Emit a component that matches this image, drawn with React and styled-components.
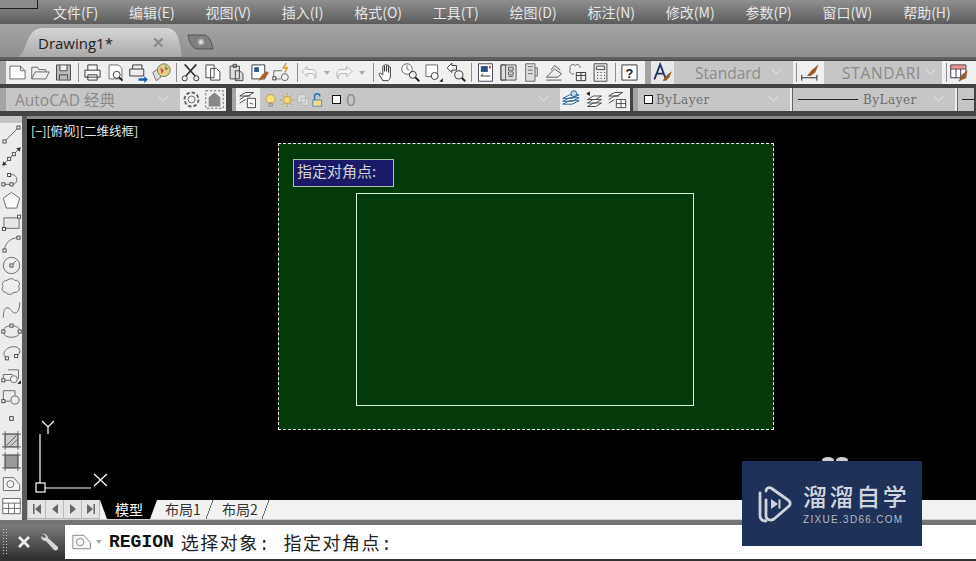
import React from "react";
import styled, { createGlobalStyle } from "styled-components";

const cjk = `"Noto Sans CJK SC", "Liberation Sans", sans-serif`;
const slab = `"DejaVu Serif", serif`;

const Global = createGlobalStyle`
  html, body { margin: 0; padding: 0; background: #000; overflow: hidden; }
  * { box-sizing: border-box; }
`;

const Page = styled.div`
  position: relative;
  width: 976px;
  height: 561px;
  display: flex;
  flex-direction: column;
  overflow: hidden;
  font-family: ${cjk};
`;

const MenuBar = styled.div`
  height: 24px;
  display: flex;
  align-items: center;
  gap: 30.8px;
  background: linear-gradient(#8f8f8f, #5c5c5c);
  padding-left: 53px;
  position: relative;
`;

const AppCorner = styled.div`
  position: absolute;
  left: 0;
  top: 0;
  width: 38px;
  height: 9px;
  background: #8a8a8a;
  border: 1px solid #1c1c1c;
  border-top: 0;
  border-left: 0;
`;

const MenuItem = styled.span`
  color: #e6e6e6;
  font-size: 14px;
  line-height: 24px;
  white-space: nowrap;
`;

const TabBar = styled.div`
  height: 33px;
  display: flex;
  align-items: flex-end;
  background: linear-gradient(#a4a4a4, #8f8f8f);
  padding-left: 17px;
  gap: 4px;
`;

const DocTab = styled.div`
  width: 165px;
  height: 29px;
  display: flex;
  align-items: center;
  justify-content: space-between;
  padding: 0 17px 0 21px;
  background: linear-gradient(#d6d6d6, #a9a9a9);
  clip-path: path("M0 29 C8 27 9 12 14 6 C17 2 20 0 28 0 L148 0 C160 0 162 8 165 29 Z");
  color: #222;
  font-size: 15px;
  font-family: "Open Sans", sans-serif;
`;

const CloseMark = styled.span`
  color: #8a8a8a;
  font-size: 15px;
  font-weight: 700;
  font-family: "Liberation Sans", sans-serif;
`;

const NewTab = styled.svg`
  width: 30px;
  height: 18px;
  margin-bottom: 6px;
`;

const ToolStack = styled.div`
  background: #434343;
  border-top: 3px solid #5f5f5f;
  padding: 1px 0 5px;
  display: flex;
  flex-direction: column;
  gap: 4px;
`;

const ToolRow = styled.div`
  height: 23px;
  display: flex;
  align-items: stretch;
`;

const Grip = styled.div`
  width: ${(p) => p.$w || 6}px;
  flex: none;
  background-color: #555;
  background-image: radial-gradient(#aaa 0.7px, transparent 0.8px);
  background-size: 2px 2px;
`;

const Strip = styled.div`
  display: flex;
  align-items: center;
  background: ${(p) => p.$bg || "#f0f0f0"};
  width: ${(p) => (p.$w ? `${p.$w}px` : "auto")};
  flex: ${(p) => (p.$grow ? 1 : "none")};
  padding: ${(p) => p.$pad || "0"};
`;

const Gap = styled.div`
  width: ${(p) => p.$w}px;
  flex: none;
  background: ${(p) => p.$bg || "#434343"};
`;

const ToolBtn = styled.div`
  width: ${(p) => p.$w || 23}px;
  height: 23px;
  flex: none;
  display: flex;
  align-items: center;
  justify-content: center;
`;

const Sep = styled.div`
  width: 1px;
  height: 19px;
  flex: none;
  background: #8e8e8e;
  margin: 0 ${(p) => p.$m ?? 2.5}px;
`;

const Chevron = styled.span`
  margin-left: auto;
  width: 7px;
  height: 7px;
  border-right: 1px solid #e0e0e0;
  border-bottom: 1px solid #e0e0e0;
  transform: rotate(45deg) translate(-2px, -2px);
  flex: none;
`;

const Combo = styled.div`
  width: ${(p) => p.$w}px;
  flex: none;
  height: 23px;
  display: flex;
  align-items: center;
  gap: ${(p) => p.$gap || 0}px;
  background: #c6c6c6;
  color: ${(p) => p.$color || "#8b8b8b"};
  font-family: ${(p) => p.$font || `"Open Sans", ${cjk}`};
  font-size: ${(p) => p.$size || 15}px;
  letter-spacing: ${(p) => p.$track || 0}px;
  padding: ${(p) => p.$pad || "0 13px 0 10px"};
  white-space: nowrap;
  overflow: hidden;
`;

const Swatch = styled.span`
  width: 9px;
  height: 9px;
  background: #fff;
  border: 1px solid #111;
  flex: none;
  margin-left: ${(p) => p.$ml || 0}px;
`;

const LayerName = styled.span`
  margin-left: 5px;
`;

const LineSample = styled.span`
  width: 60px;
  height: 1px;
  background: #222;
  flex: none;
  margin-right: ${(p) => p.$gap || 0}px;
`;

const WorkArea = styled.div`
  flex: 1;
  display: flex;
  min-height: 0;
`;

const LeftTools = styled.div`
  width: 22px;
  flex: none;
  background: #ececec;
  display: flex;
  flex-direction: column;
  align-items: center;
`;

const LeftGrip = styled.div`
  width: 22px;
  height: 7px;
  background-color: #777;
  background-image: radial-gradient(#ccc 0.7px, transparent 0.8px);
  background-size: 2px 2px;
  margin-bottom: 1px;
`;

const LeftBtn = styled.div`
  height: 21.8px;
  display: flex;
  align-items: center;
  justify-content: center;
`;

const Divider = styled.div`
  width: 5px;
  flex: none;
  background: #5d5d5d;
`;

const Viewport = styled.div`
  flex: 1;
  display: flex;
  flex-direction: column;
  min-width: 0;
  border-top: 3px solid #8a8a8a;
`;

const Canvas = styled.div`
  position: relative;
  flex: 1;
  background: #000;
`;

const ViewLabel = styled.div`
  position: absolute;
  left: 4px;
  top: 4px;
  color: #e8e8e8;
  font-size: 12.5px;
  line-height: 16px;
  white-space: nowrap;
`;

const Selection = styled.div`
  position: absolute;
  left: 251px;
  top: 24px;
  width: 496px;
  height: 287px;
  background: #033a0b;
  border: 1px dashed #f2f2f2;
`;

const InnerRect = styled.div`
  position: absolute;
  left: 77px;
  top: 49px;
  width: 338px;
  height: 213px;
  border: 1px solid #d6f2d6;
`;

const Prompt = styled.div`
  position: absolute;
  left: 14px;
  top: 15px;
  width: 101px;
  height: 28px;
  background: #1a1a68;
  border: 1px solid #a8c4a8;
  color: #d2d2d2;
  font-size: 15px;
  line-height: 22px;
  padding-left: 3px;
  white-space: nowrap;
`;

const Ucs = styled.svg`
  position: absolute;
  left: 6px;
  top: 298px;
  width: 84px;
  height: 80px;
`;

const Blob = styled.span`
  position: absolute;
  top: 338px;
  left: ${(p) => p.$x}px;
  width: 12px;
  height: 6px;
  border-radius: 50%;
  background: #cfcfcf;
`;

const LayoutBar = styled.div`
  height: 20px;
  display: flex;
  background: #f2f2f2;
  border-bottom: 1px solid #cfcfcf;
`;

const NavBtns = styled.div`
  width: 73px;
  display: flex;
  flex: none;
  background: #e4e4e4;
`;

const NavBtn = styled.div`
  flex: 1;
  display: flex;
  align-items: center;
  justify-content: center;
  border: 1px solid #b8b8b8;
  border-left-width: ${(p) => (p.$first ? 1 : 0)}px;
  border-top: 0;
`;

const ModelTab = styled.div`
  width: 57px;
  flex: none;
  padding-left: 15px;
  font-size: 14px;
  line-height: 19px;
  color: #fff;
  background: #000;
  clip-path: polygon(0 0, 100% 0, calc(100% - 7px) 100%, 7px 100%);
  white-space: nowrap;
`;

const SheetTab = styled.div`
  width: ${(p) => p.$w}px;
  flex: none;
  margin-left: ${(p) => p.$ml || 0}px;
  padding-left: ${(p) => p.$pl}px;
  font-size: 14px;
  line-height: 19px;
  color: #333;
  white-space: nowrap;
  background: linear-gradient(to bottom right, transparent 46%, #666 47%, #666 53%, transparent 54%) right / 7px 100% no-repeat;
`;

const CommandLine = styled.div`
  height: 41px;
  display: flex;
  background: #fff;
  border-top: 5px solid #757575;
  border-bottom: 2px solid #333;
`;

const CommandTools = styled.div`
  width: 65px;
  flex: none;
  display: flex;
  align-items: center;
  background: linear-gradient(#7c7c7c, #2f2f2f);
`;

const CommandGrip = styled.div`
  width: 6px;
  height: 28px;
  margin-left: 2px;
  background-image: radial-gradient(#c8c8c8 0.9px, transparent 1px);
  background-size: 3px 3px;
`;

const CommandIcon = styled.svg`
  margin-left: ${(p) => p.$ml}px;
  flex: none;
`;

const CommandText = styled.div`
  flex: 1;
  display: flex;
  align-items: center;
  padding-left: 6px;
  font-family: "Liberation Mono", ${cjk}, monospace;
  font-size: 18px;
  color: #222;
  white-space: pre;
`;

const CommandName = styled.b`
  color: #111;
  margin: 0 7px 0 4px;
`;

const Prose = styled.span`
  letter-spacing: 1.5px;
`;

const Watermark = styled.div`
  position: absolute;
  left: 742px;
  top: 461px;
  width: 180px;
  height: 85px;
  background: #1f3059;
  display: flex;
  align-items: center;
  padding-left: 15px;
  gap: 10px;
`;

const BrandName = styled.div`
  color: #d0d4dc;
  font-size: 24px;
  line-height: 28px;
  letter-spacing: 2.6px;
  font-weight: 500;
  margin-bottom: 4px;
  white-space: nowrap;
`;

const BrandUrl = styled.div`
  color: #b3b9c6;
  font-family: "Liberation Sans", sans-serif;
  font-size: 10px;
  line-height: 11px;
  letter-spacing: 1.3px;
  white-space: nowrap;
`;

const Ic = ({ children, s = 21 }) => (
  <svg width={s} height={s} viewBox="0 0 18 18" fill="none" stroke="#666" strokeWidth="0.8">
    {children}
  </svg>
);

const Node = ({ x, y }) => <rect x={x - 1.3} y={y - 1.3} width="2.6" height="2.6" fill="#fff" stroke="#444" />;

const icons = {
  newFile: <path d="M2.5 3.5h9l4 4v7h-13z M11.5 3.5v4h4" fill="#fff" />,
  open: <path d="M1.5 14.5v-10h5l1 2h6v2 M1.5 14.5l3-6h12l-3 6z" fill="#eee" />,
  save: <path d="M3 2.5h12v13h-12z M6 2.5v5h6v-5 M5.5 15v-4h7v4" fill="#bbb" stroke="#444" />,
  print: <path d="M5 7V2.5h8V7 M2.5 7h13v6h-13z M5 11h8v4.5H5z" fill="#f6f6f6" stroke="#333" />,
  preview: (
    <>
      <path d="M3.5 2.5h8l3 3v9h-11z" fill="#fff" />
      <circle cx="10" cy="11" r="3" stroke="#333" />
      <path d="M12 13l3 3" stroke="#222" strokeWidth="1.6" />
    </>
  ),
  publish: (
    <>
      <path d="M4 6V2.5h8V6 M1.5 6h12v6h-12z" fill="#eee" stroke="#333" />
      <path d="M9 14h5v-2l3 3-3 3v-2H9z" fill="#1c5fa8" stroke="none" />
    </>
  ),
  globe: (
    <>
      <path d="M1.5 9l7-5v9l-4 3z" fill="#ddd" />
      <circle cx="11" cy="7" r="5.5" fill="#e8c98a" stroke="#5a8a5a" />
      <path d="M8 5l3 2-2 3z" fill="#c0503a" stroke="none" />
      <path d="M12 3l3 3-3 1z" fill="#5aa05a" stroke="none" />
    </>
  ),
  cut: (
    <>
      <path d="M4 2l9 10M14 2L5 12" stroke="#333" strokeWidth="1.4" />
      <circle cx="4" cy="14" r="2.2" stroke="#333" />
      <circle cx="14" cy="14" r="2.2" stroke="#333" />
    </>
  ),
  copy: <path d="M2.5 2.5h7v11h-7z M6.5 5.5h5l3 3v7h-8z" fill="#fff" stroke="#444" />,
  paste: <path d="M3.5 3.5h8v11h-8z M6 2h3v2.5H6z M8 7.5h4l2.5 2.5v6H8z" fill="#ddd" stroke="#444" />,
  match: (
    <>
      <path d="M2.5 2.5h11v12h-11z" fill="#fff" stroke="#334" />
      <path d="M4.5 4.5h4v4h-4z" fill="#27508c" stroke="none" />
      <path d="M8 16l3-5 4-3 2 1-3 5z" fill="#a9652a" stroke="none" />
    </>
  ),
  quick: (
    <>
      <path d="M1.5 7.5h7 M1.5 7.5v7h6" />
      <circle cx="11" cy="13" r="3" />
      <Node x={2} y={14} />
      <path d="M12 1l-2 4h3l-2 4" stroke="#e0a020" strokeWidth="1.4" />
    </>
  ),
  undo: <path d="M7 3L2 8l5 5v-3h5a3 3 0 0 1 3 3v2c2-3 2-9-3-9H7z" fill="#f4f4f4" stroke="#aaa" />,
  redo: <path d="M11 3l5 5-5 5v-3H6a3 3 0 0 0-3 3v2c-2-3-2-9 3-9h5z" fill="#f4f4f4" stroke="#aaa" />,
  pan: <path d="M5 16l-3-5c-.5-1 .8-2 1.5-1L5 11V4c0-1.3 1.5-1.3 1.5 0v4V3c0-1.3 1.7-1.3 1.7 0v5V3.5c0-1.3 1.7-1.3 1.7 0V9V5c0-1.3 1.6-1.3 1.6 0v7c0 2-1 3-2 4z" fill="#fff" stroke="#333" />,
  zoomRt: (
    <>
      <circle cx="6" cy="6" r="4.5" fill="#fff" />
      <path d="M6 3v3l2 1" />
      <circle cx="11" cy="11" r="3" stroke="#333" />
      <path d="M13 13l3.5 3.5" stroke="#222" strokeWidth="1.6" />
    </>
  ),
  zoomWin: (
    <>
      <path d="M2.5 2.5h10v10h-10z" fill="#fff" />
      <circle cx="10" cy="12" r="3" fill="#fff" stroke="#333" />
      <path d="M14 17h3v-3z" fill="#111" stroke="none" />
    </>
  ),
  zoomPrev: (
    <>
      <path d="M1 5l4-4v2h4v4H5v2z" fill="#fff" stroke="#333" />
      <circle cx="11" cy="11" r="3.5" stroke="#333" />
      <path d="M13.5 13.5l3 3" stroke="#222" strokeWidth="1.6" />
    </>
  ),
  props: (
    <>
      <path d="M3 1.5h12v15H3z" fill="#fff" stroke="#445" />
      <path d="M5 3.5h6v5H5z" fill="#27508c" stroke="none" />
      <path d="M12 3.5h1.5v2H12z" fill="#c33" stroke="none" />
      <path d="M5 12h8 M5 12l2-2" stroke="#333" />
    </>
  ),
  design: <path d="M2.5 2.5h13v13h-13z M2.5 2.5h4v13h-4z M9 4.5h4V7H9z M9 8.5h4V11H9z M9 12.5h4" fill="#ddd" stroke="#555" />,
  palette: <path d="M4 1.5h8v15H4z M6 4h4 M6 7h4 M6 10h4 M12 5h2v7h-2" fill="#ddd" stroke="#666" />,
  sheet: <path d="M2 13l7-7 6 4-3 3z M2 15.5h13 M6 7l3-4 5 4" fill="#eee" stroke="#555" />,
  markup: (
    <>
      <path d="M3 6c-2-3 2-5 4-3 2-2 5 0 4 2" />
      <path d="M3 6c-2 3 1 5 3 4" />
      <path d="M8 9h8v7H8z M8 11.5h8 M12 9v7" stroke="#333" />
    </>
  ),
  calc: <path d="M3.5 1.5h11v15h-11z M5.5 3.5h7v3h-7z M6 9h1 M9 9h1 M12 9h1 M6 11.5h1 M9 11.5h1 M12 11.5h1 M6 14h1 M9 14h1 M12 14h1" fill="#eee" stroke="#444" />,
  help: <path d="M2.5 2.5h13v13h-13z" fill="#fff" stroke="#333" />,
  textStyle: (
    <>
      <path d="M2 15L7 2l5 13 M4 10h6" stroke="#1d3560" strokeWidth="1.6" />
      <path d="M9 16l4-5 4-3-2 5-3 3z" fill="#9a5a2a" stroke="none" />
    </>
  ),
  dimStyle: (
    <>
      <path d="M1.5 13.5h13 M1.5 11v5 M14.5 11v5" stroke="#222" />
      <path d="M6 12l4-5 6-5-3 7-4 3z" fill="#9a5a2a" stroke="none" />
    </>
  ),
  tableStyle: (
    <>
      <path d="M1.5 2.5h13v11h-13z M1.5 6h13 M6 6v7.5 M10 6v7.5" stroke="#334" fill="#fff" />
      <path d="M1.5 2.5h13V6h-13z" fill="#c44" stroke="none" opacity=".55" />
      <path d="M8 17l3-6 5-4-2 7z" fill="#9a5a2a" stroke="none" />
    </>
  ),
  gear: (
    <>
      <circle cx="9" cy="9" r="3" />
      <circle cx="9" cy="9" r="6" strokeDasharray="3 1.7" strokeWidth="1.6" />
    </>
  ),
  lockUi: (
    <>
      <path d="M1.5 1.5h15v15h-15z" strokeDasharray="2 1.5" />
      <path d="M4 15V7l5-4 5 4v8z" fill="#888" stroke="none" />
    </>
  ),
  layers: <path d="M1.5 6l5-3h7l-5 3z M1.5 9l5-3h4 M1.5 12l5-3 M8 8h7v8H8z M10 12l3 1" fill="#fff" stroke="#444" />,
  bulb: (
    <>
      <path d="M5 12C2 8 4 3 8.5 3s6.5 5 3.5 9z" fill="#f7e27a" stroke="#b9902a" />
      <path d="M6.5 13h4v3h-4z" fill="#bbb" stroke="#888" />
    </>
  ),
  sun: (
    <>
      <circle cx="9" cy="9" r="4" fill="#f3d979" stroke="#b9902a" />
      <path d="M9 1v2.5 M9 14.5V17 M1 9h2.5 M14.5 9H17 M3.5 3.5l2 2 M12.5 12.5l2 2 M3.5 14.5l2-2 M12.5 5.5l2-2" stroke="#b9902a" />
    </>
  ),
  freeze: <path d="M3 3h9v9H3z M7 7h8v8H7z" stroke="#aaa" fill="#ddd" />,
  lock: (
    <>
      <path d="M4 9V5a3 3 0 0 1 6 0" stroke="#2a75b8" strokeWidth="1.6" />
      <path d="M2 9h10v7H2z" fill="#f4d98a" stroke="#2a75b8" />
    </>
  ),
  layerSet: (
    <>
      <path d="M1.5 13l6-3h8l-6 3z M1.5 10.5l6-3h8l-6 3z M1.5 8l6-3h8l-6 3z" fill="#fff" stroke="#1d5c96" />
      <circle cx="11" cy="4" r="2.5" fill="#c9d8e8" stroke="#1d5c96" />
    </>
  ),
  layerPrev: (
    <>
      <path d="M3 12l5-3h7l-5 3z M3 15l5-3h7l-5 3z M3 9l5-3h7l-5 3z" fill="#fff" stroke="#444" />
      <path d="M2 4l3-2v4z" fill="#111" stroke="none" />
    </>
  ),
  layerTable: <path d="M1.5 6l5-3h7l-5 3z M1.5 9l5-3h4 M1.5 12l5-3 M8 9h8v7H8z M8 12.5h8 M12 9v7" fill="#fff" stroke="#444" />,
  line: (
    <>
      <path d="M3 15L15 3" />
      <Node x={3} y={15} />
      <Node x={15} y={3} />
    </>
  ),
  xline: (
    <>
      <path d="M2 16l14-14" />
      <path d="M1 17l4-1-3-3z M17 1l-4 1 3 3z" fill="#333" stroke="none" />
      <Node x={7} y={11} />
      <Node x={11} y={7} />
    </>
  ),
  pline: (
    <>
      <path d="M2 14h8c2 0 4-2 3.5-5S9 5 7 6" />
      <Node x={2} y={14} />
      <Node x={9} y={14} />
      <Node x={7} y={6} />
    </>
  ),
  polygon: <path d="M9 2l7 5-2.500 8.500h-9L2 7z" fill="#f8f8f8" />,
  rect: (
    <>
      <path d="M2.5 5h13v9h-13z" fill="#e6e6ea" />
      <Node x={15.5} y={4} />
      <Node x={2.5} y={14.5} />
    </>
  ),
  arc: (
    <>
      <path d="M3 15C3 9 8 4 15 4" />
      <Node x={3} y={15} />
      <Node x={15} y={4} />
    </>
  ),
  circle: (
    <>
      <circle cx="9" cy="9" r="7" />
      <path d="M9 9l4-4" />
      <Node x={9} y={9} />
    </>
  ),
  cloud: <path d="M5 3c2-2 6-2 7 0 3-1 5 3 3 5 2 3-1 6-4 5-2 3-6 2-7 0-3 0-4-3-2-5-2-2 0-5 3-5z" fill="#eee" />,
  spline: <path d="M2 16C2 6 6 6 9 10s7 2 7-7" />,
  ellipse: (
    <>
      <ellipse cx="9" cy="9" rx="7.5" ry="5" />
      <Node x={9} y={4} />
      <Node x={2} y={9} />
      <Node x={16} y={9} />
    </>
  ),
  earc: (
    <>
      <path d="M5 14C-1 10 5 4 11 4s7 6 2 8" />
      <Node x={5} y={14} />
      <Node x={13} y={12} />
    </>
  ),
  insert: (
    <>
      <path d="M6 5h9v8 M2 9h8" />
      <path d="M2 9v5h7" />
      <circle cx="11" cy="13" r="3" fill="#eee" />
      <path d="M14 17h3v-3z" fill="#111" stroke="none" />
      <Node x={2} y={14} />
    </>
  ),
  block: (
    <>
      <path d="M2 4h10v4 M2 4v9h6" />
      <circle cx="12" cy="12" r="3.5" fill="#eee" />
      <Node x={2} y={13} />
    </>
  ),
  point: <rect x="7.5" y="7.5" width="3" height="3" fill="#fff" stroke="#333" />,
  hatch: (
    <>
      <path d="M3.5 3.5h11v11h-11z" fill="#ccc" />
      <path d="M1 3.5h16 M1 14.5h16 M3.5 1v16 M14.5 1v16 M5 13l8-8 M8 14l6-6" stroke="#555" />
    </>
  ),
  gradient: (
    <>
      <path d="M3.5 3.5h11v11h-11z" fill="#999" />
      <path d="M1 3.5h16 M1 14.5h16 M3.5 1v16 M14.5 1v16" stroke="#555" />
    </>
  ),
  region: (
    <>
      <path d="M2 4h9l5 6v5H2z" fill="#f4f4f4" />
      <circle cx="8" cy="9.5" r="3" />
    </>
  ),
  table: <path d="M1.5 3h15v13h-15z M1.5 7h15 M1.5 11.5h15 M6.5 7v9 M11.500 7v9" fill="#fff" />,
};

const menus = ["文件(F)", "编辑(E)", "视图(V)", "插入(I)", "格式(O)", "工具(T)", "绘图(D)", "标注(N)", "修改(M)", "参数(P)", "窗口(W)", "帮助(H)"];
const drawTools = ["line", "xline", "pline", "polygon", "rect", "arc", "circle", "cloud", "spline", "ellipse", "earc", "insert", "block", "point", "hatch", "gradient", "region", "table"];

const Tools = ({ names }) =>
  names.map((n) => (
    <ToolBtn key={n}>
      <Ic>{icons[n]}</Ic>
    </ToolBtn>
  ));

const Caret = () => (
  <svg width="12" height="6" viewBox="0 0 12 6">
    <path d="M3 1h6L6 5z" fill="#aaa" />
  </svg>
);

const NavArrow = ({ d }) => (
  <svg width="12" height="12" viewBox="0 0 12 12">
    <path d={d} fill="#666" />
  </svg>
);

const App = () => (
  <Page>
    <Global />
    <MenuBar>
      <AppCorner />
      {menus.map((m) => (
        <MenuItem key={m}>{m}</MenuItem>
      ))}
    </MenuBar>

    <TabBar>
      <DocTab>
        Drawing1*
        <CloseMark>✕</CloseMark>
      </DocTab>
      <NewTab viewBox="0 0 30 18">
        <path d="M2 2h16c5 0 8 8 9 14H12C6 16 3 8 2 2z" fill="#7f7f7f" stroke="#555" />
        <circle cx="15" cy="9" r="3.5" fill="#a8a8a8" />
        <path d="M15 7v4 M13 9h4" stroke="#e4e4e4" strokeWidth="1.5" />
      </NewTab>
    </TabBar>

    <ToolStack>
      <ToolRow>
        <Grip />
        <Strip $w={639}>
          <Tools names={["newFile", "open", "save"]} />
          <Sep />
          <Tools names={["print", "preview", "publish", "globe"]} />
          <Sep />
          <Tools names={["cut", "copy", "paste", "match", "quick"]} />
          <Sep />
          <ToolBtn $w={18}>
            <Ic>{icons.undo}</Ic>
          </ToolBtn>
          <ToolBtn $w={17}>
            <Caret />
          </ToolBtn>
          <ToolBtn $w={19}>
            <Ic>{icons.redo}</Ic>
          </ToolBtn>
          <ToolBtn $w={16}>
            <Caret />
          </ToolBtn>
          <Sep />
          <Tools names={["pan", "zoomRt", "zoomWin", "zoomPrev"]} />
          <Sep />
          <Tools names={["props", "design", "palette", "sheet", "markup", "calc"]} />
          <Sep />
          <ToolBtn>
            <Ic>
              {icons.help}
              <text x="9" y="13.5" fontSize="11" fontWeight="700" textAnchor="middle" fill="#222" stroke="none" fontFamily="Liberation Sans">
                ?
              </text>
            </Ic>
          </ToolBtn>
        </Strip>
        <Grip $w={6} />
        <Strip $w={23} $bg="#e8e8e8">
          <Tools names={["textStyle"]} />
        </Strip>
        <Combo $w={119} $pad="0 13px 0 21px" $size={15.5}>
          Standard
          <Chevron />
        </Combo>
        <Strip $w={31} $pad="0 0 0 2px">
          <Sep $m={1} />
          <Gap $w={1} $bg="#f0f0f0" />
          <ToolBtn>
            <Ic>{icons.dimStyle}</Ic>
          </ToolBtn>
        </Strip>
        <Combo $w={118} $pad="0 8px 0 18px" $size={15.5} $track={0.7}>
          STANDARI
          <Chevron />
        </Combo>
        <Strip $grow $pad="0 0 0 3px">
          <Sep $m={1} />
          <ToolBtn>
            <Ic>{icons.tableStyle}</Ic>
          </ToolBtn>
        </Strip>
      </ToolRow>

      <ToolRow>
        <Grip />
        <Combo $w={174} $pad="0 13px 0 9px" $size={15.5}>
          AutoCAD 经典
          <Chevron />
        </Combo>
        <Strip $w={46}>
          <Tools names={["gear", "lockUi"]} />
        </Strip>
        <Gap $w={6} />
        <Grip $w={4} />
        <Strip $w={24} $pad="0 0 0 1px">
          <Tools names={["layers"]} />
        </Strip>
        <Combo $w={300} $pad="0 13px 0 3px" $size={17}>
          <Ic s={16}>{icons.bulb}</Ic>
          <Ic s={16}>{icons.sun}</Ic>
          <Ic s={16}>{icons.freeze}</Ic>
          <Ic s={16}>{icons.lock}</Ic>
          <Swatch $ml={5} />
          <LayerName>0</LayerName>
          <Chevron />
        </Combo>
        <Strip $w={70}>
          <Tools names={["layerSet", "layerPrev", "layerTable"]} />
        </Strip>
        <Gap $w={3} />
        <Grip $w={5} />
        <Combo $w={152} $gap={3} $font={slab} $size={12} $track={0.5} $color="#6c6c6c" $pad="0 13px 0 6px">
          <Swatch />
          ByLayer
          <Chevron />
        </Combo>
        <Gap $w={2} $bg="#eee" />
        <Gap $w={1} $bg="#666" />
        <Combo $w={162} $font={slab} $size={12} $track={0.5} $color="#6c6c6c" $pad="0 13px 0 5px">
          <LineSample $gap={5} />
          ByLayer
          <Chevron />
        </Combo>
        <Gap $w={2} $bg="#eee" />
        <Gap $w={1} $bg="#666" />
        <Combo $w={16} $pad="0 0 0 4px">
          <LineSample />
        </Combo>
      </ToolRow>
    </ToolStack>

    <WorkArea>
      <LeftTools>
        <LeftGrip />
        {drawTools.map((n) => (
          <LeftBtn key={n}>
            <Ic>{icons[n]}</Ic>
          </LeftBtn>
        ))}
      </LeftTools>
      <Divider />
      <Viewport>
        <Canvas>
          <ViewLabel>[−][俯视][二维线框]</ViewLabel>
          <Selection>
            <Prompt>指定对角点:</Prompt>
            <InnerRect />
          </Selection>
          <Blob $x={795} />
          <Blob $x={809} />
          <Ucs viewBox="0 0 84 80" fill="none" stroke="#fff" strokeWidth="1.2">
            <path d="M7 17v49" />
            <path d="M12 71h46" />
            <rect x="3" y="66" width="9" height="9" />
            <path d="M9 4l6 6 6-6 M15 10v7" />
            <path d="M61 57l13 12 M74 57L61 69" />
          </Ucs>
        </Canvas>
        <LayoutBar>
          <NavBtns>
            <NavBtn $first>
              <NavArrow d="M2 1h1.5v10H2z M10 1v10L4 6z" />
            </NavBtn>
            <NavBtn>
              <NavArrow d="M9 1v10L3 6z" />
            </NavBtn>
            <NavBtn>
              <NavArrow d="M3 1v10l6-5z" />
            </NavBtn>
            <NavBtn>
              <NavArrow d="M10 1H8.5v10H10z M2 1v10l6-5z" />
            </NavBtn>
          </NavBtns>
          <ModelTab>模型</ModelTab>
          <SheetTab $w={60} $ml={-4} $pl={12}>
            布局1
          </SheetTab>
          <SheetTab $w={56} $pl={9}>
            布局2
          </SheetTab>
        </LayoutBar>
      </Viewport>
    </WorkArea>

    <CommandLine>
      <CommandTools>
        <CommandGrip />
        <CommandIcon $ml={6} width="20" height="20" viewBox="0 0 20 20">
          <path d="M5 5l10 10M15 5L5 15" stroke="#f2f2f2" strokeWidth="2.6" />
        </CommandIcon>
        <CommandIcon $ml={5} width="22" height="22" viewBox="0 0 22 22">
          <path d="M3 3c3-1 6 1 6 4l10 9c1 3-2 4-4 3L7 10C4 10 2 8 2 5l3 2 2-1-1-2z" fill="#d6d6d6" />
        </CommandIcon>
      </CommandTools>
      <CommandText>
        <Ic s={22}>
          <path d="M1.5 3.5h9l5.5 6v5H1.5z" fill="#f6f6f6" stroke="#888" />
          <circle cx="7.5" cy="9" r="3" fill="#f6f6f6" stroke="#888" />
        </Ic>
        <Caret />
        <CommandName>REGION</CommandName>
        <Prose>选择对象: 指定对角点:</Prose>
      </CommandText>
    </CommandLine>

    <Watermark>
      <svg width="36" height="40" viewBox="0 0 36 40" fill="none" stroke="#cfd3db" strokeWidth="2.8">
        <path d="M3 9v22c0 4 2 6 6 6" strokeLinecap="round" />
        <path d="M9 7c0-3 3-4 5-3l17 12c3 2 3 5 0 7L17 35c-3 2-8 1-8-3V16" strokeLinejoin="round" strokeLinecap="round" />
        <path d="M14 15v10l7-5z" fill="#cfd3db" stroke="none" />
        <path d="M22.5 15.5v9" strokeWidth="2" />
      </svg>
      <div>
        <BrandName>溜溜自学</BrandName>
        <BrandUrl>ZIXUE.3D66.COM</BrandUrl>
      </div>
    </Watermark>
  </Page>
);

export default App;
